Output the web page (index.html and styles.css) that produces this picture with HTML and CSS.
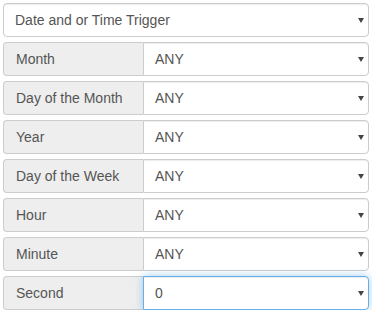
FILE: index.html
```html
<!DOCTYPE html>
<html>
<head>
<meta charset="utf-8">
<link rel="stylesheet" href="styles.css">
</head>
<body>
<div class="form">
  <div class="select full"><span class="value">Date and or Time Trigger</span><span class="arrow"></span></div>
  <div class="group"><div class="addon">Month</div><div class="select"><span class="value">ANY</span><span class="arrow"></span></div></div>
  <div class="group"><div class="addon">Day of the Month</div><div class="select"><span class="value">ANY</span><span class="arrow"></span></div></div>
  <div class="group"><div class="addon">Year</div><div class="select"><span class="value">ANY</span><span class="arrow"></span></div></div>
  <div class="group"><div class="addon">Day of the Week</div><div class="select"><span class="value">ANY</span><span class="arrow"></span></div></div>
  <div class="group"><div class="addon">Hour</div><div class="select"><span class="value">ANY</span><span class="arrow"></span></div></div>
  <div class="group"><div class="addon">Minute</div><div class="select"><span class="value">ANY</span><span class="arrow"></span></div></div>
  <div class="group"><div class="addon">Second</div><div class="select focus"><span class="value">0</span><span class="arrow"></span></div></div>
</div>
</body>
</html>
```
FILE: styles.css
```css
html, body {
  margin: 0;
  padding: 0;
  background: #fff;
}
.form {
  padding: 3px 0 0 3px;
  width: 366px;
  display: flex;
  flex-direction: column;
  gap: 5px;
  font-family: "Liberation Sans", Arial, sans-serif;
  font-size: 14px;
  color: #555;
}
.select {
  position: relative;
  box-sizing: border-box;
  height: 34px;
  border: 1px solid #ccc;
  border-radius: 4px;
  background: #fff;
  box-shadow: inset 0 1px 1px rgba(0,0,0,.075);
  display: flex;
  align-items: center;
  padding: 0 12px 0 11px;
}
.full {
  flex: none;
}
.arrow {
  position: absolute;
  right: 4px;
  top: 50%;
  margin-top: -2px;
  width: 0;
  height: 0;
  border-left: 3px solid transparent;
  border-right: 3px solid transparent;
  border-top: 5px solid #444;
}
.group {
  display: flex;
  height: 34px;
}
.addon {
  box-sizing: border-box;
  width: 140px;
  height: 34px;
  background: #eee;
  border: 1px solid #ccc;
  border-right: 0;
  border-radius: 4px 0 0 4px;
  display: flex;
  align-items: center;
  padding: 0 12px;
  color: #555;
  white-space: nowrap;
}
.group .select {
  flex: 1;
  border-radius: 0 4px 4px 0;
}
.select.focus {
  border-color: #66afe9;
  box-shadow: inset 0 1px 1px rgba(0,0,0,.075), 0 0 8px rgba(102,175,233,.6);
}
```
